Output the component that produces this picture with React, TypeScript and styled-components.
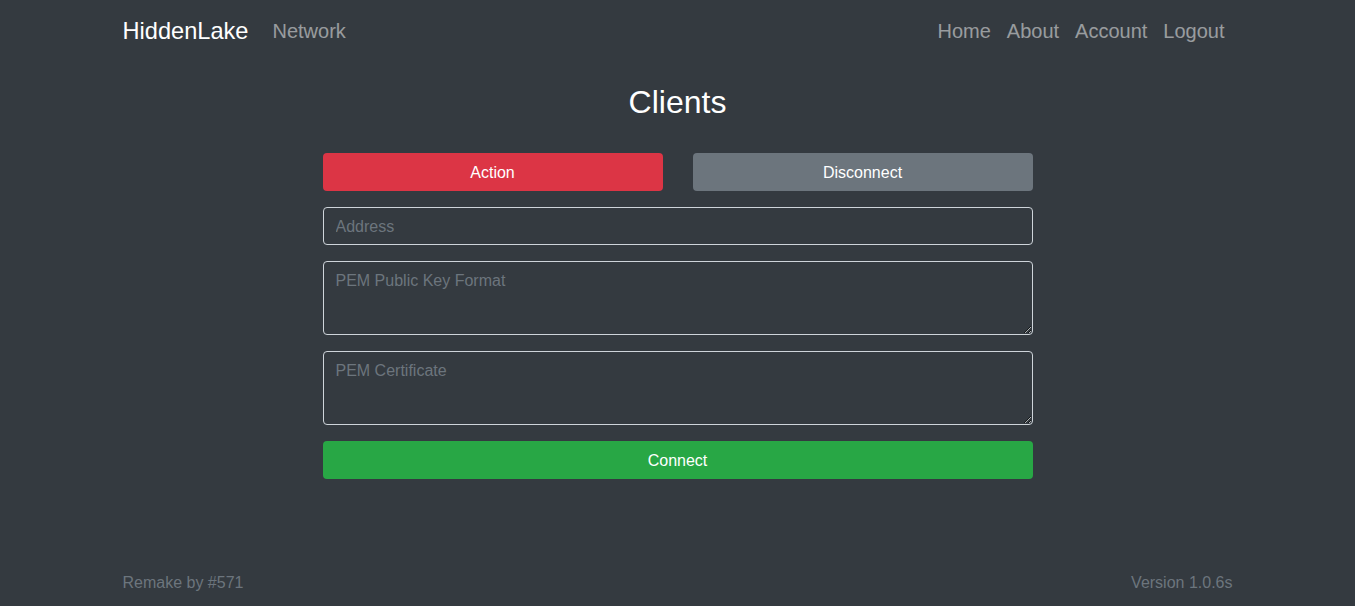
import React from 'react'
import styled, { createGlobalStyle } from 'styled-components'

const GlobalStyle = createGlobalStyle`
  * { box-sizing: border-box; }
  html, body {
    margin: 0;
    padding: 0;
    background: #343a40;
    font-family: 'Liberation Sans', Arial, sans-serif;
    color: #fff;
  }
`

const Page = styled.div`
  min-height: 100vh;
  display: flex;
  flex-direction: column;
`

const Container = styled.div`
  width: 1140px;
  margin: 0 auto;
  padding: 0 15px;
`

const NavBar = styled.nav`
  display: flex;
  align-items: center;
  justify-content: space-between;
  padding: 16px 0;
`

const NavGroup = styled.div`
  display: flex;
  align-items: center;
`

const Brand = styled.a`
  font-size: 23.6px;
  line-height: 30px;
  color: #fff;
  text-decoration: none;
  margin-right: 16px;
`

const NavLink = styled.a`
  font-size: 20px;
  line-height: 30px;
  color: rgba(255, 255, 255, 0.5);
  text-decoration: none;
  padding: 0 8px;
`

const Title = styled.h2`
  margin: 21px 0 32px;
  font-size: 32px;
  font-weight: 400;
  line-height: 1.2;
  text-align: center;
`

const Form = styled.div`
  width: 710px;
  margin: 0 auto;
  display: flex;
  flex-direction: column;
  gap: 16px;
`

const ButtonRow = styled.div`
  display: grid;
  grid-template-columns: 1fr 1fr;
  gap: 30px;
`

const Button = styled.button<{ $tone: 'danger' | 'secondary' | 'success' }>`
  height: 38px;
  padding: 1px 12px 0;
  border: none;
  border-radius: 4px;
  font-family: inherit;
  font-size: 16px;
  color: #fff;
  background: ${p => p.$tone === 'danger' ? '#dc3545' : p.$tone === 'success' ? '#28a745' : '#6c757d'};
  cursor: pointer;
`

const fieldBase = `
  width: 100%;
  background: transparent;
  border: 1px solid #ced4da;
  border-radius: 4px;
  padding: 7px 12px 5px;
  font-family: 'Liberation Sans', Arial, sans-serif;
  font-size: 16px;
  line-height: 24px;
  color: #fff;
  &::placeholder { color: #6c757d; }
`

const Input = styled.input`
  ${fieldBase}
  height: 38px;
  display: block;
`

const TextArea = styled.textarea`
  ${fieldBase}
  height: 74px;
  display: block;
`

const Footer = styled.footer`
  margin-top: auto;
  padding-bottom: 11px;
`

const FooterInner = styled(Container)`
  display: flex;
  justify-content: space-between;
  color: #6c757d;
  font-size: 16px;
  line-height: 24px;
`

export default function App() {
  return (
    <Page>
      <GlobalStyle />
      <Container>
        <NavBar>
          <NavGroup>
            <Brand href="#">HiddenLake</Brand>
            <NavLink href="#">Network</NavLink>
          </NavGroup>
          <NavGroup>
            <NavLink href="#">Home</NavLink>
            <NavLink href="#">About</NavLink>
            <NavLink href="#">Account</NavLink>
            <NavLink href="#">Logout</NavLink>
          </NavGroup>
        </NavBar>
      </Container>
      <Title>Clients</Title>
      <Form>
        <ButtonRow>
          <Button $tone="danger">Action</Button>
          <Button $tone="secondary">Disconnect</Button>
        </ButtonRow>
        <Input placeholder="Address" />
        <TextArea placeholder="PEM Public Key Format" />
        <TextArea placeholder="PEM Certificate" />
        <Button $tone="success">Connect</Button>
      </Form>
      <Footer>
        <FooterInner>
          <span>Remake by #571</span>
          <span>Version 1.0.6s</span>
        </FooterInner>
      </Footer>
    </Page>
  )
}
